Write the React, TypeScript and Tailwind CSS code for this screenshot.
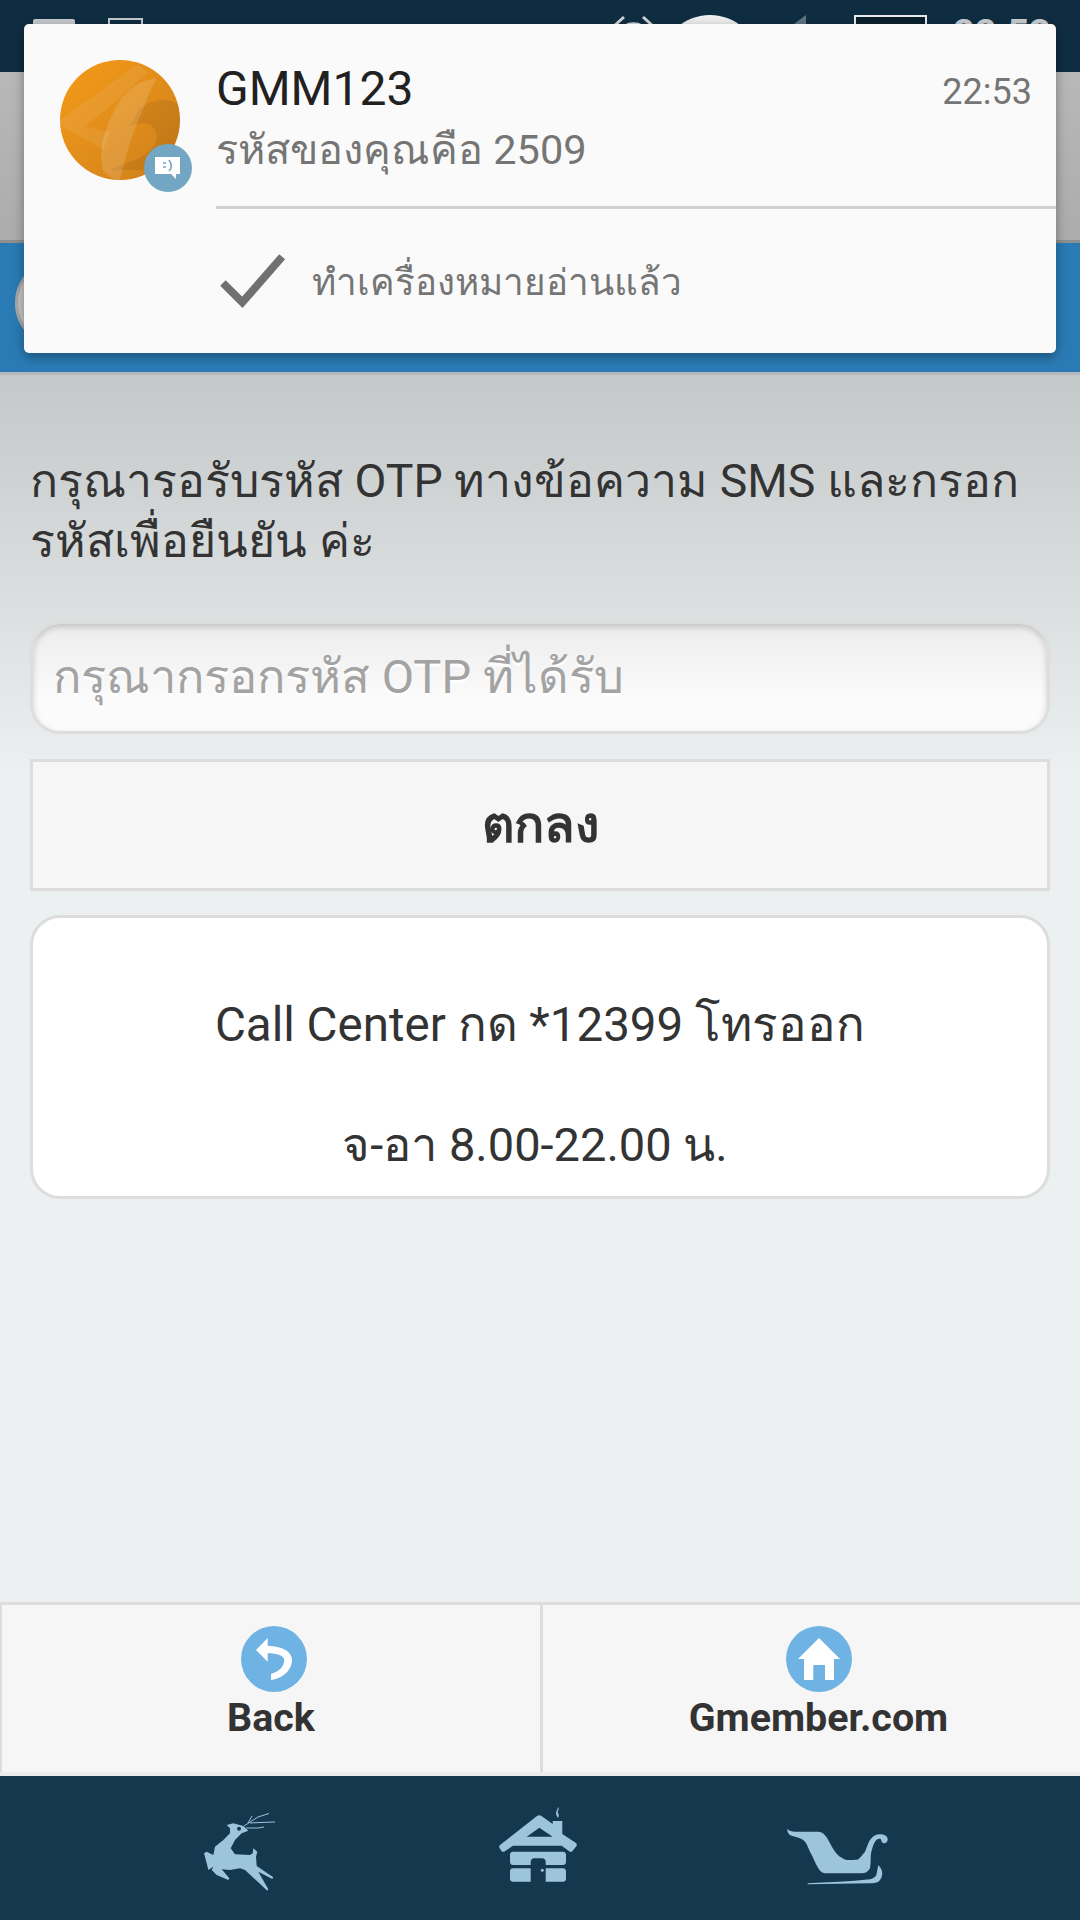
const TH = { fontFamily: 'Roboto, "Noto Sans", "DejaVu Sans", sans-serif' };

function Deer() {
  return (
    <svg viewBox="0 0 110 110" className="h-[110px] w-[110px]">
      <path
        fill="#9cc4da"
        d="M46.7 35L53.3 33.3L63.3 36L68.3 40.7L61.7 43.3L55 50L50.7 58.3L55 64.3L70 65L72.7 63.3L73.3 58.3L77.3 61.7L76 66.7L76.7 76L93.3 87.3L92.3 89L78.3 81.7L88.3 99.3L87.3 100.7L65 80L60 78.3L50 80L41.7 79.3L49.3 88.3L48.3 90L36.7 85L31.7 80L33.3 76.7L28.3 80L26.7 73.3L24 63.3L26.7 61.7L33.3 65L35 56.7L43.3 50L50 43.3L50 38.3Z"
      />
      <circle cx="59" cy="38.7" r="2" fill="#14384d" />
      <path
        fill="none"
        stroke="#9cc4da"
        strokeWidth="1"
        d="M64 36L78 27L89 23.5M68 33L72 26M70 33L80 32.5L95 32M66 38L78 38L84 37"
      />
    </svg>
  );
}

function Lodge() {
  return (
    <svg viewBox="0 0 120 110" className="h-[110px] w-[120px]">
      <g fill="#9cc4da">
        <path d="M78 7c2 2-1 4 0 6 1 2 1 3 0 5-1-2-2-3-2-5s2-4 2-6z" />
        <path
          fillRule="evenodd"
          d="M57 16c1.500-1 3-1 4.500 0L72.700 24V21H82.300V34L96 43c1 1 1 2 .5 3L92.500 51c-1 1-2 1-3 .5L81.700 45.700H33L24.500 51.500c-1 .5-2 .5-3-.5L19.500 48c-.5-1-.5-2 .5-3zM46.700 36.700H72.700L59.300 27.700z"
        />
        <path d="M33 51.700H83c1.700 0 3 1.300 3 3V62c0 1.700-1.300 3-3 3H65.700V62c0-2-1.500-3.700-3.500-3.700H54.200c-2 0-3.500 1.700-3.500 3.700v3H33c-1.700 0-3-1.300-3-3V54.700c0-1.700 1.300-3 3-3z" />
        <path d="M33 68.300H50.700V81.700H33c-1.700 0-3-1.300-3-3V71.300c0-1.700 1.300-3 3-3zM65.700 68.300H83c1.700 0 3 1.300 3 3V78.700c0 1.700-1.300 3-3 3H65.700z" />
        <circle cx="62.300" cy="70.300" r="1.500" />
      </g>
    </svg>
  );
}

function Sleigh() {
  return (
    <svg viewBox="0 0 160 130" className="h-[130px] w-[160px]">
      <g fill="#9cc4da">
        <path d="M27.300 38.700C29 41 32 41.700 35 41.700H58.300C63 41.700 66 46 68.300 50C72 57 76 65 81.700 67.700C84 69.500 86 70 88.300 70H94C96 70 97.500 69.500 98.300 69.300C101 67 103 64 105 61.700C107 57 108 53 110 50C113 46 116 44.300 120 44.300C124 44.300 127.700 46 127.700 49.300C127.700 52 126 53.300 124 53.300C122 53.300 121.500 51 120.700 49C118 48 116 50 115 51.700C113 55 112 59 111 63.300C110.500 68 111 73 110 78.300C108 82 105 83.300 101.700 83.300H65C62 83.300 60 81 58.300 78.300C55 73 53 67 50 61.700C48 57 46 52 43.300 50C40 47.500 34 47 30 45C28 43.500 27 41 27.300 38.700Z" />
        <path d="M47.300 93.300C68 92.500 90 91.500 110 89.300C113.500 88.500 116.500 86.500 116.700 83.300L118.300 75C121 78 122.300 80.500 122.300 83.300C122.300 87 120.500 90 118.300 91.700C116 93 113 93.300 110 93.300C90 93.500 68 94 48 94.300Z" />
      </g>
    </svg>
  );
}

function FooterButton({ label, icon, offset }: { label: string; icon: React.ReactNode; offset?: boolean }) {
  return (
    <div className={offset ? 'flex flex-col items-center bg-[#f6f6f6] pl-[14px] pt-[21px]' : 'flex flex-col items-center bg-[#f6f6f6] pt-[21px]'}>
      <div className={offset ? 'flex h-[66px] w-[66px] items-center justify-center rounded-full bg-[#6fb3e4]' : 'ml-[5px] flex h-[66px] w-[66px] items-center justify-center rounded-full bg-[#6fb3e4]'}>{icon}</div>
      <div className="mt-[3px] text-[39.4px] font-bold leading-[46px] text-[#333333]" style={TH}>{label}</div>
    </div>
  );
}

function StatusPeek() {
  return (
    <div className="flex h-[72px] shrink-0 items-start overflow-hidden bg-[#0f2d40]">
      <div className="ml-[33px] mt-[19px] h-[12px] w-[42px] rounded-t-[2px] bg-[#c4c8cc]" />
      <div className="ml-[33px] mt-[18px] h-[16px] w-[35px] border-2 border-[#c4c8cc]" />
      <svg viewBox="0 0 41 14" className="ml-[470px] mt-[14px] h-[14px] w-[41px]">
        <path fill="none" stroke="#d0d4d8" strokeWidth="3" d="M1 12L11 3M40 12L30 3M12 12c5-3 12-3 17 0" />
      </svg>
      <div className="ml-[6px] mt-[15px] h-[100px] w-[100px] rounded-full bg-gradient-to-b from-[#f0f0f0] to-[#b8bcbe]" />
      <svg viewBox="0 0 16 12" className="ml-[30px] mt-[15px] h-[12px] w-[16px]">
        <path fill="#5d7582" d="M16 0V12H0z" />
      </svg>
      <div className="ml-[48px] mt-[15px] h-[30px] w-[73px] border-2 border-[#e8eaec] bg-[#0a1f2c]" />
      <div className="ml-[26px] mt-[15px] text-[38px] font-bold leading-[38px] text-[#c8ccd0]">22:53</div>
    </div>
  );
}

export default function App() {
  return (
    <div className="relative flex h-[1920px] w-[1080px] flex-col overflow-hidden bg-[#ecf0f1]" style={TH}>
      <StatusPeek />
      <div className="h-[171px] shrink-0 border-b-[3px] border-[#8f8f8f] bg-gradient-to-b from-[#b8b8b8] to-[#acacac]" />
      <div className="h-[132px] shrink-0 border-b-[3px] border-[#b6b9ba] bg-[#2a7bb5]" />

      <main className="flex flex-1 flex-col bg-gradient-to-b from-[#c4c8c9] to-[#ecf0f1] to-[400px] px-[30px] pt-[76px]">
        <p className="text-[46.4px] leading-[60px] text-[#333333]">
          กรุณารอรับรหัส OTP ทางข้อความ SMS และกรอก
          <br />
          รหัสเพื่อยืนยัน ค่ะ
        </p>
        <div className="mt-[50px] flex h-[113px] items-center rounded-[30px] border-[3px] border-[#dddddd] bg-gradient-to-b from-[#ececec] to-[#fbfbfb] to-[70%] px-[20px] shadow-[inset_0_3px_6px_rgba(0,0,0,0.18)]">
          <span className="text-[47px] text-[#a3a3a3] [text-shadow:0_3px_0_#ffffff]">กรุณากรอกรหัส OTP ที่ได้รับ</span>
        </div>
        <div className="mt-[25px] flex h-[132px] items-center justify-center border-[3px] border-[#dddddd] bg-[#f6f6f6] text-[50px] font-bold text-[#333333]">
          ตกลง
        </div>
        <div className="mt-[24px] flex h-[284px] flex-col items-center gap-[62px] rounded-[30px] border-[3px] border-[#dddddd] bg-white pt-[78px] text-[47.5px] leading-[58px] text-[#333333]">
          <div>Call Center กด *12399 โทรออก</div>
          <div className="pr-[10px] text-[47px]">จ-อา 8.00-22.00 น.</div>
        </div>
      </main>

      <div className="grid h-[174px] shrink-0 grid-cols-[538px_1fr] gap-x-[3px] border-t-[3px] border-b-[4px] border-t-[#dddddd] border-b-[#ececec] bg-[#dddddd] pl-[2px]">
        <FooterButton
          label="Back"
          icon={
            <svg viewBox="0 0 66 66" className="h-[66px] w-[66px]">
              <path fill="#fff" d="M15 24L26.700 12V20C40 20 51 25 51 34C51 45 40 53 30 54V48C37 46 43.300 41 43.300 34C43.300 30 36 27.300 26.700 27.300V35.700Z" />
            </svg>
          }
        />
        <FooterButton
          offset
          label="Gmember.com"
          icon={
            <svg viewBox="0 0 66 66" className="h-[66px] w-[66px]">
              <path fill="#fff" d="M33 12L54 33H48V54H39V39H27.300V54H18V33H12Z" />
            </svg>
          }
        />
      </div>
      <nav className="flex h-[144px] shrink-0 items-start bg-[#14384d]">
        <div className="ml-[180px] mt-[14px]"><Deer /></div>
        <div className="ml-[190px] mt-[24px]"><Lodge /></div>
        <div className="ml-[160px] mt-[14px]"><Sleigh /></div>
      </nav>

      <div className="absolute left-[15px] top-[258px] h-[90px] w-[90px] rounded-full border-[3px] border-[#a8a8a8] bg-[#c4c4c4]" />

      <div className="absolute left-[24px] top-[24px] h-[329px] w-[1032px] overflow-hidden rounded-[5px] bg-[#fafafa] shadow-[0_4px_12px_rgba(0,0,0,0.35)]">
        <div className="flex h-[187px]">
          <div className="relative ml-[36px] mt-[36px] h-[120px] w-[120px] shrink-0">
            <svg viewBox="0 0 120 120" className="h-[120px] w-[120px]">
              <defs>
                <clipPath id="av"><circle cx="60" cy="60" r="60" /></clipPath>
                <linearGradient id="og" x1="0" y1="0" x2="1" y2="1">
                  <stop offset="0" stopColor="#f59b18" />
                  <stop offset="1" stopColor="#cd7f1c" />
                </linearGradient>
              </defs>
              <circle cx="60" cy="60" r="60" fill="url(#og)" />
              <g clipPath="url(#av)">
                <path fill="#000" opacity="0.07" d="M80 48C98 36 115 38 125 50V110H50L75 100C92 92 100 82 95 70C90 62 80 62 70 66Z" />
                <path fill="#fff" opacity="0.08" d="M76.700 5L0 60V65L43.300 90L50 72L25 66.700L60 38L88 12Z" />
                <path fill="#fff" opacity="0.14" d="M96.700 18.300C84 20 76 24 70 30C62 36 57 44 53 53C47 66 43 76 41.700 86.700C41 96 41 104 43 110C47 116 53 119 60 120C62 110 65 100 68 90C72 76 77 62 83 50C87 38 92 27 96.700 18.300Z" />
              </g>
            </svg>
            <div className="absolute left-[84px] top-[84px] flex h-[48px] w-[48px] items-center justify-center rounded-full bg-[#72a6c2]">
              <svg viewBox="0 0 28 24" className="h-[24px] w-[28px]">
                <path fill="#fff" d="M1 1h25v17h-4v5l-5-5H1z" />
                <path fill="none" stroke="#72a6c2" strokeWidth="1.600" d="M9 7h3M9 11h3M15 4c3 4 3 8 0 11" />
              </svg>
            </div>
          </div>
          <div className="ml-[36px] flex-1">
            <div className="flex items-start justify-between pr-[24px]">
              <span className="mt-[37px] text-[48px] leading-[56px] text-[#212121]">GMM123</span>
              <span className="mt-[47px] text-[36px] leading-[42px] text-[#757575]">22:53</span>
            </div>
            <div className="mt-[5px] text-[41.5px] leading-[56px] text-[#757575]">รหัสของคุณคือ 2509</div>
            <div className="mt-[28px] h-[3px] bg-[#d0d0d0]" />
          </div>
        </div>
        <div className="ml-[196px] flex items-start">
          <svg viewBox="0 0 70 56" className="mt-[42px] h-[56px] w-[68px]">
            <path fill="none" stroke="#707070" strokeWidth="8" d="M3 30l20 20L64 3" />
          </svg>
          <span className="ml-[24px] mt-[47px] text-[36.8px] leading-[50px] text-[#757575]">ทำเครื่องหมายอ่านแล้ว</span>
        </div>
      </div>
    </div>
  );
}
